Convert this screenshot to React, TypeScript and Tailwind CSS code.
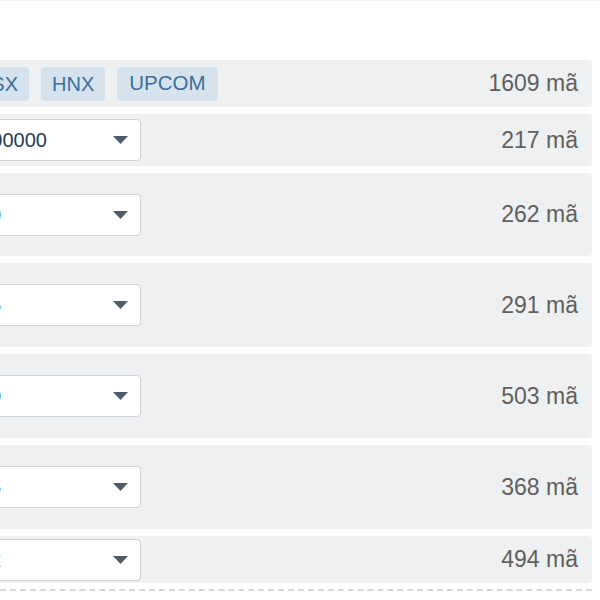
import React from 'react';

const rows = [
  { value: '1000000', count: '217 mã', h: 'h-[52px]', pr: 'pr-[66px]' },
  { value: '> 20', count: '262 mã', h: 'h-[83px]', pr: 'pr-[112px]' },
  { value: '> 15', count: '291 mã', h: 'h-[84px]', pr: 'pr-[112px]' },
  { value: '> 30', count: '503 mã', h: 'h-[84px]', pr: 'pr-[112px]' },
  { value: '> 25', count: '368 mã', h: 'h-[84px]', pr: 'pr-[112px]' },
  { value: '> 12', count: '494 mã', h: 'h-[47px]', pr: 'pr-[112px]' },
];

const Caret: React.FC = () => (
  <svg width="15" height="8" viewBox="0 0 15 8" className="shrink-0">
    <path d="M0 0 L15 0 L7.5 8 Z" fill="#4f5b66" />
  </svg>
);

const App: React.FC = () => {
  return (
    <div
      className="w-[600px] h-[600px] overflow-hidden bg-white border-t border-[#f1f1f1]"
      style={{ fontFamily: '"Liberation Sans", Arial, sans-serif' }}
    >
      <div className="ml-[-60px] w-[652px] pt-[59px] flex flex-col gap-[7px]">
        <div className="h-[47px] rounded-[4px] bg-[#eff0f2] flex items-center justify-between pr-[14px]">
          <div className="flex items-center gap-[12px] pl-[10px]">
            <span className="h-[34px] w-[79px] flex items-center justify-end pr-[11px] rounded-[4px] bg-[#d5e3ee] text-[#3d6e9c] text-[20px]">
              HSX
            </span>
            <span className="h-[34px] px-[11px] flex items-center rounded-[4px] bg-[#d5e3ee] text-[#3d6e9c] text-[20px]">
              HNX
            </span>
            <span className="h-[34px] px-[12px] flex items-center rounded-[4px] bg-[#d5e3ee] text-[#3d6e9c] text-[20.5px]">
              UPCOM
            </span>
          </div>
          <span className="text-[23px] text-[#606060]">1609 mã</span>
        </div>

        {rows.map((r, i) => (
          <div
            key={i}
            className={`${r.h} rounded-[4px] bg-[#eff0f2] flex items-center justify-between pr-[14px]`}
          >
            <div className="w-[201px] h-[42px] rounded-[4px] border border-[#cfd2d6] bg-white flex items-center justify-between pr-[12px] pl-[6px]">
              <span className={`${r.pr} text-[20px] text-[#2b3a55] flex-1 text-right whitespace-nowrap`}>
                {r.value}
              </span>
              <Caret />
            </div>
            <span className="text-[23px] text-[#606060]">{r.count}</span>
          </div>
        ))}
      </div>
      <div className="mt-[6px] w-[592px] border-t-2 border-dashed border-[#d6d6d6]" />
    </div>
  );
};

export default App;
